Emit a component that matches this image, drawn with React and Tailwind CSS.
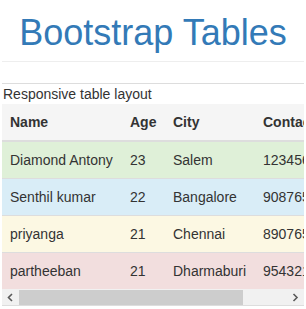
import React from "react";

const rows = [
  { name: "Diamond Antony", age: 23, city: "Salem", contact: "1234567890", bg: "bg-[#dff0d8]" },
  { name: "Senthil kumar", age: 22, city: "Bangalore", contact: "9087654321", bg: "bg-[#d9edf7]" },
  { name: "priyanga", age: 21, city: "Chennai", contact: "8907654321", bg: "bg-[#fcf8e3]" },
  { name: "partheeban", age: 21, city: "Dharmaburi", contact: "9543210987", bg: "bg-[#f2dede]" },
];

const headers = ["Name", "Age", "City", "Contact"];

function Chevron({ dir }) {
  const d = dir === "left" ? "M5 1 L1.5 4.5 L5 8" : "M1.5 1 L5 4.5 L1.5 8";
  return (
    <svg width="7" height="9" viewBox="0 0 7 9" fill="none">
      <path d={d} stroke="#5a5a5a" strokeWidth="1.6" />
    </svg>
  );
}

export default function App() {
  return (
    <div className="mx-[2px] font-['Liberation_Sans',Arial,sans-serif] text-[14px] text-[#333] bg-white">
      <div className="border-b border-[#eeeeee] pb-[8px]">
        <h1 className="pt-[13px] text-center text-[36px] leading-[40px] font-normal text-[#337ab7]">
          Bootstrap Tables
        </h1>
      </div>
      <div className="mt-[21px] border-t border-[#dddddd]">
        <div className="pl-[1px] leading-5">Responsive table layout</div>
        <div className="overflow-hidden">
          <table className="table-fixed w-[359px] border-collapse whitespace-nowrap text-left">
            <colgroup>
              <col className="w-[120px]" />
              <col className="w-[43px]" />
              <col className="w-[90px]" />
              <col className="w-[106px]" />
            </colgroup>
            <thead>
              <tr className="bg-[#f5f5f5]">
                {headers.map((h) => (
                  <th key={h} className="border-b-2 border-[#dddddd] p-2 leading-5 font-bold">
                    {h}
                  </th>
                ))}
              </tr>
            </thead>
            <tbody>
              {rows.map((r) => (
                <tr key={r.name} className={r.bg}>
                  <td className="border-t border-[#dddddd] p-2 leading-5">{r.name}</td>
                  <td className="border-t border-[#dddddd] p-2 leading-5">{r.age}</td>
                  <td className="border-t border-[#dddddd] p-2 leading-5">{r.city}</td>
                  <td className="border-t border-[#dddddd] p-2 leading-5">{r.contact}</td>
                </tr>
              ))}
            </tbody>
          </table>
        </div>
        <div className="flex h-[16px] bg-[#f1f1f1] border-b border-[#dddddd] box-content">
          <div className="flex w-[17px] items-center justify-center">
            <Chevron dir="left" />
          </div>
          <div className="mt-[1px] h-[15px] w-[224px] bg-[#cdcdcd]" />
          <div className="flex-1" />
          <div className="flex w-[17px] items-center justify-center">
            <Chevron dir="right" />
          </div>
        </div>
      </div>
    </div>
  );
}
